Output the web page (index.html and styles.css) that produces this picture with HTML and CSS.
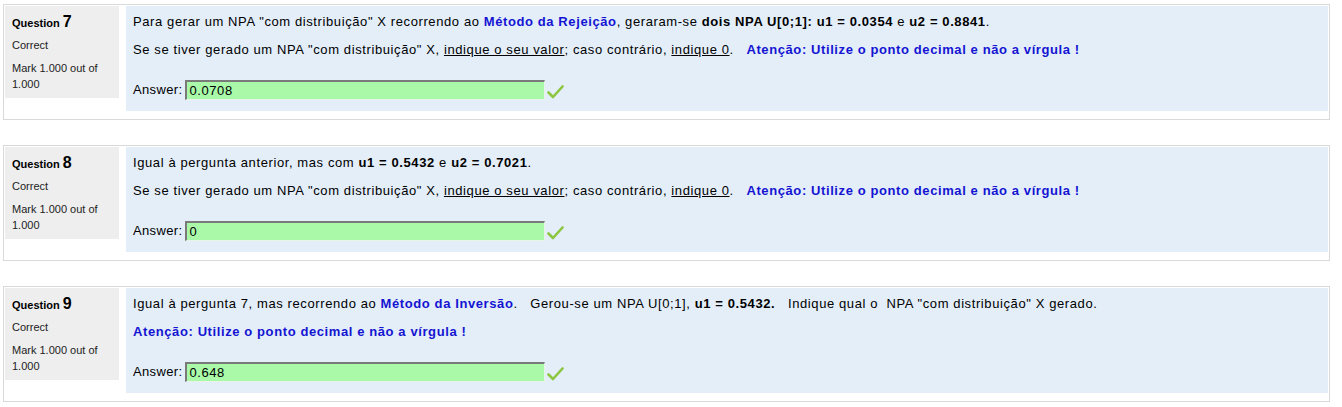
FILE: index.html
```html
<!DOCTYPE html>
<html lang="pt">
<head>
<meta charset="utf-8">
<link rel="stylesheet" href="styles.css">
</head>
<body>
<div class="page">
  <div class="que">
    <div class="info">
      <div class="qno">Question <span class="num">7</span></div>
      <div class="grade">Correct</div>
      <div class="mark">Mark 1.000 out of 1.000</div>
    </div>
    <div class="content">
      <p>Para gerar um NPA "com distribuição" X recorrendo ao <b class="blue">Método da Rejeição</b>, geraram-se <b>dois NPA U[0;1]: u1 = 0.0354</b> e <b>u2 = 0.8841</b>.</p>
      <p>Se se tiver gerado um NPA "com distribuição" X, <u>indique o seu valor</u>; caso contrário, <u>indique 0</u>.&nbsp;&nbsp; <b class="blue">Atenção: Utilize o ponto decimal e não a vírgula !</b></p>
      <div class="answer">
        <label>Answer:</label>
        <span class="field">0.0708</span>
        <svg class="tick" width="17" height="16" viewBox="0 0 17 16"><path d="M1.5 8.5 L6 13 L15.5 2.5" fill="none" stroke="#8cc63f" stroke-width="2.6" stroke-linejoin="round" stroke-linecap="round"/></svg>
      </div>
    </div>
  </div>
  <div class="que">
    <div class="info">
      <div class="qno">Question <span class="num">8</span></div>
      <div class="grade">Correct</div>
      <div class="mark">Mark 1.000 out of 1.000</div>
    </div>
    <div class="content">
      <p>Igual à pergunta anterior, mas com <b>u1 = 0.5432</b> e <b>u2 = 0.7021</b>.</p>
      <p>Se se tiver gerado um NPA "com distribuição" X, <u>indique o seu valor</u>; caso contrário, <u>indique 0</u>.&nbsp;&nbsp; <b class="blue">Atenção: Utilize o ponto decimal e não a vírgula !</b></p>
      <div class="answer">
        <label>Answer:</label>
        <span class="field">0</span>
        <svg class="tick" width="17" height="16" viewBox="0 0 17 16"><path d="M1.5 8.5 L6 13 L15.5 2.5" fill="none" stroke="#8cc63f" stroke-width="2.6" stroke-linejoin="round" stroke-linecap="round"/></svg>
      </div>
    </div>
  </div>
  <div class="que">
    <div class="info">
      <div class="qno">Question <span class="num">9</span></div>
      <div class="grade">Correct</div>
      <div class="mark">Mark 1.000 out of 1.000</div>
    </div>
    <div class="content">
      <p>Igual à pergunta 7, mas recorrendo ao <b class="blue">Método da Inversão</b>.&nbsp;&nbsp; Gerou-se um NPA U[0;1], <b>u1 = 0.5432.</b>&nbsp;&nbsp; Indique qual o&nbsp; NPA "com distribuição" X gerado.</p>
      <p><b class="blue">Atenção: Utilize o ponto decimal e não a vírgula !</b></p>
      <div class="answer">
        <label>Answer:</label>
        <span class="field">0.648</span>
        <svg class="tick" width="17" height="16" viewBox="0 0 17 16"><path d="M1.5 8.5 L6 13 L15.5 2.5" fill="none" stroke="#8cc63f" stroke-width="2.6" stroke-linejoin="round" stroke-linecap="round"/></svg>
      </div>
    </div>
  </div>
</div>
</body>
</html>
```

FILE: styles.css
```css
html, body {
  margin: 0;
  padding: 0;
  background: #fff;
}
body {
  font-family: "Liberation Sans", Arial, sans-serif;
  color: #000;
}
.page {
  padding: 4px 12px 0 3px;
  display: flex;
  flex-direction: column;
  gap: 25px;
}
.que {
  display: flex;
  align-items: flex-start;
  gap: 7px;
  border: 1px solid #d9d9d9;
  padding: 1px 1px 7px 1px;
  height: 106px;
}
.info {
  width: 100px;
  height: 78px;
  flex: none;
  background: #eeeeee;
  padding: 8px 7px 6px 7px;
  font-size: 11px;
  line-height: 16px;
  color: #222;
}
.qno {
  font-weight: bold;
  color: #000;
  height: 16px;
  line-height: 16px;
}
.qno .num {
  font-size: 16px;
}
.grade {
  margin-top: 7px;
}
.mark {
  margin-top: 7px;
  width: 96px;
}
.content {
  flex: 1;
  height: 91px;
  background: #e3eef9;
  padding: 8px 7px 6px 7px;
  font-size: 13px;
  line-height: 16px;
  letter-spacing: 0.6px;
}
.content p {
  margin: 0 0 12px 0;
}
.blue {
  color: #1414d2;
}
.answer {
  display: flex;
  align-items: center;
  margin-top: 22px;
}
.answer label {
  margin-right: 3px;
  letter-spacing: 0.35px;
}
.field {
  box-sizing: border-box;
  width: 360px;
  height: 20px;
  background: #a9f9a9;
  border-top: 2px solid #7a7a7a;
  border-left: 2px solid #7a7a7a;
  border-right: 1px solid #e8f4e8;
  border-bottom: 1px solid #e8f4e8;
  padding: 0 2px;
  line-height: 17px;
  font-size: 13px;
}
.tick {
  margin-left: 2px;
  margin-top: 3px;
}
```
